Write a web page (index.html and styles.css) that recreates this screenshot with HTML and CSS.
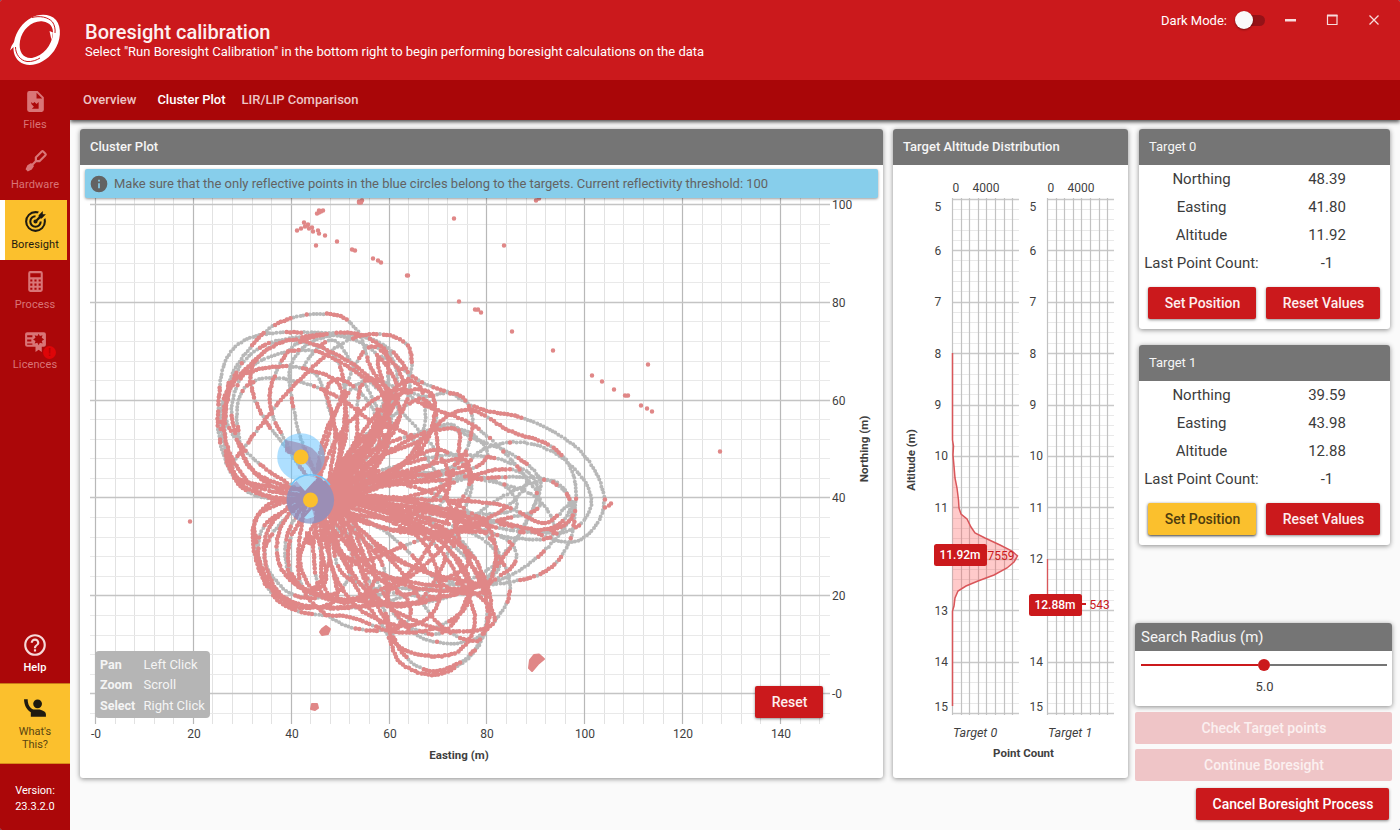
FILE: index.html
```html
<!DOCTYPE html>
<html lang="en">
<head>
<meta charset="utf-8">
<title>Boresight calibration</title>
<link rel="stylesheet" href="styles.css">
</head>
<body>
<div class="app">
  <header class="header">
    <svg class="logo" viewBox="0 0 70 80">
      <path fill="#fff" fill-rule="evenodd" d="M31 18C39 13.500 50 13.500 56 20C62 27 61 41 54 51C46 62 33 67.500 24 64C17 61.500 13 55 13.500 47L10 50.500L11.500 46L14 42C16 31 23 22 31 18ZM43 21.500C33 20 22 29 20 41C18 52 24 59 32 58C43 56 52 45 53 34C53.500 27 50 22.500 43 21.500Z"/>
      <path d="M32 17.500C40 15.500 48 17 52.500 22C54.500 25 55.500 29 55 33" fill="none" stroke="#cb191c" stroke-width="1"/>
      <path d="M15.500 47C15.500 54 20 60.500 27 61.500C32 62 37 60 40 58" fill="none" stroke="#cb191c" stroke-width="1"/>
      <path d="M49.500 31L53 32.500L51.500 40Z" fill="#fff"/>
    </svg>
    <div class="heading">
      <h1>Boresight calibration</h1>
      <p>Select "Run Boresight Calibration" in the bottom right to begin performing boresight calculations on the data</p>
    </div>
    <div class="window-tools">
      <span class="dark-label">Dark Mode:</span>
      <span class="toggle"></span>
      <svg class="window-icons" viewBox="0 0 110 24">
        <path d="M5 12.300H16" stroke="#f7dcdc" stroke-width="2.500"/>
        <path d="M47.500 7.500H57V16.500H47.500Z" stroke="#f7dcdc" stroke-width="1.200" fill="none"/>
        <path d="M47 7.500H57.500" stroke="#f7dcdc" stroke-width="2"/>
        <path d="M89.500 7.500L98.500 16.500M98.500 7.500L89.500 16.500" stroke="#f7dcdc" stroke-width="1.300"/>
      </svg>
    </div>
  </header>
  <div class="body">
    <nav class="sidebar">
      <a class="nav-item"><svg viewBox="0 0 24 24"><path fill-rule="evenodd" d="M6 2H14L20 8V20A2 2 0 0 1 18 22H6A2 2 0 0 1 4 20V4A2 2 0 0 1 6 2ZM13 3.500V9H18.500ZM8 12.500L9.500 14L11 12.500L13 14.500L15 12.500V19H8.500L10.500 17L8 14.500Z"/></svg><span>Files</span></a>
      <a class="nav-item"><svg viewBox="0 0 24 24"><g transform="rotate(45 12 12)"><path fill-rule="evenodd" d="M10.500-1H13.500Q15.500-1 15.500 1V9.500L13 12V16H14L15 20L13.500 24H10.500L9 20L10 16H11V12L8.500 9.500V1Q8.500-1 10.500-1ZM10.500 1V8.500L12 10L13.500 8.500V1Z"/></g></svg><span>Hardware</span></a>
      <a class="nav-item active"><svg viewBox="0 0 24 24"><path d="M12 2A10 10 0 0 0 2 12A10 10 0 0 0 12 22A10 10 0 0 0 22 12C22 10.840 21.790 9.690 21.390 8.610L19.790 10.210C19.930 10.800 20 11.400 20 12A8 8 0 0 1 12 20A8 8 0 0 1 4 12A8 8 0 0 1 12 4C12.600 4 13.200 4.070 13.790 4.210L15.400 2.600C14.310 2.210 13.160 2 12 2M19 2L15 6V7.500L12.450 10.050C12.300 10 12.150 10 12 10A2 2 0 0 0 10 12A2 2 0 0 0 12 14A2 2 0 0 0 14 12C14 11.850 14 11.700 13.950 11.550L16.500 9H18L22 5H19V2M12 6A6 6 0 0 0 6 12A6 6 0 0 0 12 18A6 6 0 0 0 18 12H16A4 4 0 0 1 12 16A4 4 0 0 1 8 12A4 4 0 0 1 12 8V6Z"/></svg><span>Boresight</span></a>
      <a class="nav-item"><svg viewBox="0 0 24 24"><path fill-rule="evenodd" d="M7 2H17A2 2 0 0 1 19 4V20A2 2 0 0 1 17 22H7A2 2 0 0 1 5 20V4A2 2 0 0 1 7 2ZM7 4V8H17V4ZM7 10V12H9V10ZM11 10V12H13V10ZM15 10V12H17V10ZM7 14V16H9V14ZM11 14V16H13V14ZM15 14V16H17V14ZM7 18V20H9V18ZM11 18V20H13V18ZM15 18V20H17V18Z"/></svg><span>Process</span></a>
      <a class="nav-item licences"><svg viewBox="0 0 24 24"><path fill-rule="evenodd" d="M4 3H20A2 2 0 0 1 22 5V15A2 2 0 0 1 20 17H18V22L15 20L12 22V17H4A2 2 0 0 1 2 15V5A2 2 0 0 1 4 3ZM4 6V8H9V6ZM4 10V12H8V10ZM4 14V15H9V14ZM15 4.500L13.800 6.800L11.200 6L12 8.500L9.700 10L12 11.500L11.200 14L13.800 13.200L15 15.500L16.200 13.200L18.800 14L18 11.500L20.300 10L18 8.500L18.800 6L16.200 6.800Z"/></svg><i class="badge">!</i><span>Licences</span></a>
      <a class="nav-item help"><svg viewBox="0 0 24 24"><path d="M11,18H13V16H11V18M12,2A10,10 0 0,0 2,12A10,10 0 0,0 12,22A10,10 0 0,0 22,12A10,10 0 0,0 12,2M12,20C7.590,20 4,16.410 4,12C4,7.590 7.590,4 12,4C16.410,4 20,7.590 20,12C20,16.410 16.410,20 12,20M12,6A4,4 0 0,0 8,10H10A2,2 0 0,1 12,8A2,2 0 0,1 14,10C14,12 11,11.750 11,15H13C13,12.750 16,12.500 16,10A4,4 0 0,0 12,6Z"/></svg><span>Help</span></a>
      <a class="whats-this"><svg viewBox="0 0 24 24"><path d="M1 3H4.500C4.500 8 6.500 11.500 10 13H16Q22 14.500 22 17.500V20H7.500V15.500C3.500 13 1 8.500 1 3Z"/><circle cx="14" cy="7.500" r="4.200"/></svg><span>What's<br>This?</span></a>
      <div class="version">Version:<br>23.3.2.0</div>
    </nav>
    <main class="main">
      <div class="tabs"><a>Overview</a><a class="current">Cluster Plot</a><a>LIR/LIP Comparison</a></div>
      <div class="content">
        <section class="card cluster">
          <h2>Cluster Plot</h2>
          <div class="plot-area">
            <svg id="cluster" class="chart" viewBox="80 165 803 613"></svg>
            <div class="notice"><svg viewBox="0 0 24 24"><path d="M13,9H11V7H13M13,17H11V11H13M12,2A10,10 0 0,0 2,12A10,10 0 0,0 12,22A10,10 0 0,0 22,12A10,10 0 0,0 12,2Z"/></svg>Make sure that the only reflective points in the blue circles belong to the targets. Current reflectivity threshold: 100</div>
            <div class="hints"><b>Pan</b><span>Left Click</span><b>Zoom</b><span>Scroll</span><b>Select</b><span>Right Click</span></div>
            <button class="btn reset">Reset</button>
          </div>
        </section>
        <section class="card altitude">
          <h2>Target Altitude Distribution</h2>
          <svg id="altitude" class="chart" viewBox="893 165 235 613"></svg>
        </section>
        <aside class="side">
          <section class="card target">
            <h3>Target 0</h3>
            <div class="values"><span>Northing</span><span>48.39</span><span>Easting</span><span>41.80</span><span>Altitude</span><span>11.92</span><span>Last Point Count:</span><span>-1</span></div>
            <div class="actions"><button class="btn">Set Position</button><button class="btn">Reset Values</button></div>
          </section>
          <section class="card target">
            <h3>Target 1</h3>
            <div class="values"><span>Northing</span><span>39.59</span><span>Easting</span><span>43.98</span><span>Altitude</span><span>12.88</span><span>Last Point Count:</span><span>-1</span></div>
            <div class="actions"><button class="btn yellow">Set Position</button><button class="btn">Reset Values</button></div>
          </section>
          <div class="bottom">
            <section class="card radius">
              <h3>Search Radius (m)</h3>
              <div class="slider"><i class="fill"></i><i class="knob"></i><i class="rest"></i></div>
              <div class="radius-value">5.0</div>
            </section>
            <button class="btn disabled">Check Target points</button>
            <button class="btn disabled second">Continue Boresight</button>
            <button class="btn cancel">Cancel Boresight Process</button>
          </div>
        </aside>
      </div>
    </main>
  </div>
</div>
<script src="charts.js"></script>
</body>
</html>
```

FILE: styles.css
```css
* { box-sizing: border-box; }
body { margin: 0; background: #12224a; font-family: Roboto, sans-serif; color: #3c3c3c; }
h1, h2, h3, p { margin: 0; font-weight: 400; }
.app { width: 1400px; height: 830px; display: flex; flex-direction: column; background: #fafafa; border-radius: 2px; overflow: hidden; }
.header { height: 80px; background: #cb191c; color: #fff; display: flex; flex: none; }
.logo { width: 70px; height: 80px; }
.heading { padding: 20px 0 0 15px; flex: 1; }
.heading h1 { font-size: 20px; line-height: 24px; font-weight: 500; color: #fdf0f0; }
.heading p { font-size: 13px; line-height: 15px; }
.window-tools { display: flex; align-items: center; height: 40px; }
.dark-label { font-size: 13px; margin-right: 8px; }
.toggle { width: 30px; height: 11px; border-radius: 6px; background: #951217; margin-right: 15px; }
.toggle::before { content: ""; display: block; width: 18px; height: 18px; margin-top: -4px; border-radius: 50%; background: #fafafa; box-shadow: 0 1px 2px rgba(0,0,0,.4); }
.window-icons { width: 110px; height: 24px; margin-right: 10px; }
.body { display: flex; flex: 1; min-height: 0; }
.sidebar { width: 70px; flex: none; background: #ab0709; display: flex; flex-direction: column; color: #d97577; position: relative; z-index: 2; }
.nav-item { height: 60px; display: flex; flex-direction: column; align-items: center; padding-top: 9px; font-size: 11px; line-height: 13px; letter-spacing: .1px; position: relative; }
.nav-item svg, .whats-this svg { width: 25px; height: 25px; fill: currentColor; margin-bottom: 4px; flex: none; }
.nav-item.active { background: #fbc02d; color: #1e1a10; border-left: 5px solid #fff; margin-right: 3px; padding-right: 2px; }
.badge { position: absolute; left: 43px; top: 26px; width: 13px; height: 13px; border-radius: 50%; background: #de0508; color: #b80204; font: 700 10px/13px Roboto, sans-serif; text-align: center; }
.help { margin-top: auto; height: 61px; color: #fff; font-weight: 500; padding-top: 10px; }
.help svg { color: #f6d9d9; width: 26px; height: 26px; margin-bottom: 3px; }
.whats-this { height: 81px; background: #fbc02d; border-top: 1px solid #c97a18; border-bottom: 1px solid #d98b1c; color: #1e1a10; text-align: center; font-size: 11px; line-height: 13px; padding-top: 12px; display: flex; flex-direction: column; align-items: center; }
.whats-this span { color: #5a4510; }
.version { height: 66px; padding-top: 19px; font-size: 11px; line-height: 16px; color: #fff; text-align: center; }
.main { flex: 1; min-width: 0; display: flex; flex-direction: column; }
.tabs { height: 40px; background: #a90608; display: flex; align-items: center; padding: 0 0 2px 13px; gap: 21px; font-size: 13px; font-weight: 500; color: #edc5c5; box-shadow: 0 2px 4px rgba(0,0,0,.7); position: relative; clip-path: inset(0 0 -10px 0); }
.tabs a:last-child { margin-left: -5px; }
.tabs .current { color: #fff; }
.content { flex: 1; display: flex; padding: 9px 8px 0 10px; }
.card { background: #fff; border-radius: 3px; box-shadow: 0 1px 5px rgba(0,0,0,.45); overflow: hidden; }
.card h2, .card h3 { height: 36px; line-height: 35px; padding-left: 10px; font-size: 13px; background: #757575; color: #f5f5f5; }
.card h2 { font-weight: 500; }
.cluster { width: 803px; height: 649px; margin-right: 10px; }
.plot-area { position: relative; height: 613px; }
.chart { display: block; width: 100%; height: 613px; }
.chart text { font-family: Roboto, sans-serif; font-size: 12px; fill: #3f3f3f; }
.chart .axis-title { font-weight: 700; font-size: 11.5px; }
.chart .series { font-style: italic; font-size: 12.5px; }
.chart .tag { fill: #fff; font-weight: 500; font-size: 12px; }
.chart .count { fill: #cb191c; font-size: 12px; }
.notice { position: absolute; left: 5px; top: 4px; width: 793px; height: 29px; background: #87ceeb; border-radius: 2px; box-shadow: 0 1px 3px rgba(0,0,0,.4); display: flex; align-items: center; padding-left: 4px; font-size: 13px; letter-spacing: -.008px; color: #636363; }
.notice svg { width: 20px; height: 20px; margin-right: 5px; fill: #636363; }
.hints { position: absolute; left: 15px; top: 486px; width: 115px; height: 67px; border-radius: 4px; background: #b5b5b5; color: #f4f4f4; display: grid; grid-template-columns: 43.5px auto; grid-auto-rows: 20.5px; padding: 3.5px 0 0 5px; font-size: 13px; line-height: 20px; }
.hints span { white-space: nowrap; }
.hints b { font-size: 12.5px; }
.btn { border: 0; border-radius: 2px; background: #cb191c; color: #fdeeee; font: 500 14px/32px Roboto, sans-serif; height: 32px; padding: 0 0 0 1px; box-shadow: 0 1px 3px rgba(0,0,0,.45); text-align: center; }
.reset { position: absolute; left: 675px; top: 521px; width: 68px; }
.altitude { width: 235px; height: 649px; margin-right: 7px; }
.side { width: 257px; display: flex; flex-direction: column; }
.target { width: 251px; height: 200px; margin: 0 0 16px 4px; flex: none; }
.values { display: grid; grid-template-columns: 125px 126px; grid-auto-rows: 28px; font-size: 15px; line-height: 28px; text-align: center; margin-bottom: 10px; }
.values span { white-space: nowrap; }
.actions { display: flex; gap: 10px; padding-left: 9px; }
.actions .btn { width: 108px; }
.actions .btn:last-child { width: 114px; }
.btn.yellow { background: #fbc02d; color: #4f3d0e; box-shadow: 0 1px 3px rgba(0,0,0,.8); }
.bottom { margin-top: 62px; display: flex; flex-direction: column; }
.radius { height: 83px; margin-bottom: 6px; }
.card.radius h3 { height: 28px; line-height: 28px; padding-left: 6px; font-size: 15px; }
.slider { display: flex; align-items: center; height: 28px; padding: 0 5px 0 6px; }
.slider .fill { width: 117px; height: 2px; background: #cb191c; }
.slider .knob { width: 12px; height: 12px; border-radius: 50%; background: #cb191c; }
.slider .rest { flex: 1; height: 2px; background: #757575; }
.radius-value { text-align: center; font-size: 13px; line-height: 16px; padding-left: 2px; }
.btn.disabled { background: #efc5c7; color: #fbf0f0; box-shadow: none; }
.btn.second { margin-top: 5px; }
.btn.cancel { width: 193px; align-self: flex-end; margin: 7px 3px 0 0; color: #fff; }
```

FILE: charts.js
```js
let seed = 4242;
function rnd() {
  seed = (seed * 1664525 + 1013904223) % 4294967296;
  return seed / 4294967296;
}
const line = (x1, y1, x2, y2, c, w = 1) => `<path d="M${x1} ${y1}L${x2} ${y2}" stroke="${c}" stroke-width="${w}"/>`;
const text = (x, y, s, cls = '', anchor = 'start') => `<text x="${x}" y="${y}" class="${cls}" text-anchor="${anchor}">${s}</text>`;

// Closed Catmull-Rom curve sampled at an even spacing.
function sample(pts, step) {
  const out = [];
  const n = pts.length;
  let last = null;
  for (let i = 0; i < n; i++) {
    const [a, b, c, d] = [0, 1, 2, 3].map(k => pts[(i + k - 1 + n) % n]);
    for (let t = 0; t < 1; t += 0.008) {
      const q = k => 0.5 * (2 * b[k] + (c[k] - a[k]) * t + (2 * a[k] - 5 * b[k] + 4 * c[k] - d[k]) * t * t + (3 * b[k] - a[k] - 3 * c[k] + d[k]) * t * t * t);
      const p = [q(0), q(1)];
      if (!last || Math.hypot(p[0] - last[0], p[1] - last[1]) >= step) { out.push(p); last = p; }
    }
  }
  return out;
}

const loops = [
  [[330,500],[290,500],[252,494],[231,473],[219,435],[219,395],[226,360],[245,340],[275,333],[325,333],[365,337],[388,352],[397,378],[388,410],[365,450]],
  [[335,490],[275,499],[240,472],[224,430],[230,380],[250,348],[270,328],[295,317],[320,314],[342,317],[360,335],[372,370],[400,410],[380,450]],
  [[320,490],[262,477],[240,447],[232,405],[250,365],[290,340],[335,354],[372,380],[385,412],[355,460]],
  [[320,485],[285,440],[270,405],[275,375],[295,345],[330,335],[365,345],[388,368],[395,392],[370,440]],
  [[325,495],[288,450],[265,420],[252,390],[253,365],[280,342],[315,345],[338,362],[345,400],[340,450]],
  [[330,490],[305,450],[292,400],[291,365],[310,343],[345,334],[378,342],[400,360],[410,385],[397,420],[360,465]],
  [[320,495],[280,490],[248,465],[238,430],[240,395],[265,378],[310,385],[350,405],[385,440],[365,475]],
  [[315,495],[250,490],[226,450],[221,410],[236,380],[270,367],[310,370],[340,387],[345,440]],
  [[330,490],[335,430],[320,380],[305,365],[330,340],[350,360],[380,420],[360,460]],
  [[330,490],[350,450],[390,400],[425,390],[435,410],[420,450],[370,480]],
  [[325,492],[380,430],[410,403],[450,393],[468,404],[472,430],[455,465],[400,480]],
  [[340,490],[390,430],[378,360],[400,368],[423,383],[450,393],[480,409],[526,419],[567,440],[592,466],[604,497],[598,522],[580,540],[558,541],[520,528],[430,510]],
  [[340,495],[430,465],[438,425],[470,410],[510,431],[545,443],[565,459],[575,482],[573,515],[552,530],[515,531],[440,515]],
  [[335,492],[420,480],[462,466],[482,450],[515,442],[545,448],[568,463],[588,487],[590,510],[573,529],[540,532],[470,515],[400,500]],
  [[340,495],[410,483],[480,478],[530,477],[554,483],[570,500],[564,520],[540,530],[500,522],[430,510]],
  [[345,490],[420,460],[470,455],[510,463],[535,480],[535,505],[515,540],[480,575],[430,585],[360,560]],
  [[345,490],[430,430],[480,441],[518,458],[540,480],[532,510],[505,555],[470,590],[410,595],[340,570]],
  [[340,500],[430,500],[500,505],[545,523],[573,502],[570,540],[550,568],[520,580],[475,583],[400,560]],
  [[335,505],[350,575],[385,630],[400,662],[431,675],[458,666],[480,643],[487,605],[475,570],[430,530]],
  [[330,500],[345,560],[380,610],[397,645],[430,656],[460,650],[475,620],[460,580],[430,540],[380,510]],
  [[330,500],[380,560],[392,610],[425,639],[470,641],[498,617],[510,590],[502,562],[475,535],[400,510]],
  [[320,500],[272,503],[253,530],[260,572],[280,602],[310,614],[350,617],[395,632],[440,626],[470,595],[440,540],[380,510]],
  [[315,500],[285,510],[266,535],[267,570],[285,598],[320,607],[375,605],[430,600],[480,580],[450,540]],
  [[320,500],[294,520],[285,555],[300,588],[350,600],[420,603],[470,588],[500,565],[480,530],[400,500]],
  [[315,505],[270,520],[258,550],[270,585],[295,607],[335,600],[330,560]],
  [[315,500],[275,530],[265,560],[285,590],[315,598],[345,585],[350,540]],
  [[320,505],[329,560],[310,590],[290,570],[292,535]],
  [[330,505],[330,560],[355,605],[395,625],[428,618],[440,585],[415,535]],
  [[330,505],[400,510],[460,540],[485,580],[490,615],[470,655],[432,671],[400,650],[380,600]],
  [[330,490],[240,480],[225,430],[235,375],[265,345],[310,336],[350,333],[375,342],[388,360],[380,410]],
  [[330,498],[262,512],[257,545],[270,588],[300,605],[360,607],[420,590],[470,560],[430,525]],
  [[340,494],[450,460],[470,470],[468,500],[440,550],[390,590],[350,600],[320,590],[315,530]],
  [[330,480],[400,395],[410,350],[380,334],[340,345],[290,390],[250,440],[232,470],[260,485]],
  [[340,500],[400,570],[440,625],[480,640],[486,600],[460,540],[440,480],[400,430],[360,440]],
  [[320,500],[330,430],[365,350],[395,365],[415,400],[480,430],[540,500],[500,520],[420,540],[350,560]],
  [[345,500],[375,575],[430,590],[500,580],[545,550],[572,510],[545,480],[470,520],[420,600],[370,590]],
  [[300,490],[245,450],[225,410],[245,370],[300,350],[345,365],[400,410],[450,480],[400,530]],
  [[330,505],[300,560],[330,600],[400,580],[440,530],[470,480],[440,450],[390,470]]
];
// Curved passes that leave the target area and turn back to it.
[[-66,125,18,22],[-56,128,22,-20],[-48,145,24,16],[-36,140,28,-26],[-24,150,26,28],[-13,170,22,-22],[-3,205,24,20],[4,195,18,-16],[10,235,24,-26],[20,205,32,24],[30,190,36,-34],[38,215,26,22],[48,185,40,-28],[60,155,34,28],[78,112,26,-16],[-80,115,24,22],[100,98,24,10]].forEach(([deg, len, w, bend]) => {
  const a = deg * Math.PI / 180, ca = Math.cos(a), sa = Math.sin(a);
  loops.push([[-.08, 4], [.4, w + bend], [.8, w + bend * .5], [1, 0], [.85, -w + bend * .5], [.35, -w * .4 + bend]].map(([u, v]) => [322 + len * u * ca - v * sa, 493 + len * u * sa + v * ca]));
});

let grey = '', red = '';
loops.forEach((pts, k) => {
  const bias = (k * 7 % 5 - 2) * .09;
  let hot = false;
  sample(pts, 3.3).forEach(([x, y]) => {
    const dist = Math.hypot(x - 325, y - 500);
    let p = dist < 100 ? 1 : dist < 150 ? .72 : .42;
    if (y > 510 && x < 500) p = .82;
    if (y < 465 && x < 310) p = .42;
    if (x > 490) p = .26;
    if (rnd() < .34) hot = rnd() < p + bias;
    const px = x + rnd() * .9 - .45, py = y + rnd() * .9 - .45;
    const d = `M${px.toFixed(1)} ${py.toFixed(1)}h0`;
    grey += d;
    if (hot) red += d;
  });
});
[[454,218],[504,245],[407,275],[459,301],[475,309],[478,309],[481,312],[512,331],[553,350],[592,375],[602,381],[614,389],[625,395],[628,395],[641,405],[647,408],[652,411],[648,364],[720,451],[190,521],[609,505],[611,503],[605,507],[605,499],[316,245],[325,235],[337,241],[352,249],[355,250],[373,258],[378,260],[381,262],[536,200],[539,198],[297,230],[301,228],[304,222],[305,226],[308,224],[309,228],[312,227],[313,231],[318,230],[319,233],[317,213],[319,210],[321,211],[323,210],[319,212],[359,201],[361,202],[362,200],[408,275],[359,202]].forEach(([x, y]) => { red += `M${x} ${y + .5}h0`; });

let g = '';
for (let i = 0; i < 38; i++) {
  const x = Math.round(95 + i * 19.57) + .5;
  if (i % 5) g += line(x, 198, x, 724, '#e2e2e2');
}
for (let i = 0; i < 27; i++) {
  const y = Math.round(204 + i * 19.57) + .5;
  if (i % 5) g += line(90, y, 830, y, '#e9e9e9', 1.2);
}
for (let i = 0; i < 8; i++) {
  const x = Math.round(95 + i * 97.85) + .5;
  g += line(x, 198, x, 724, '#b8b8b8', 1.2);
  g += text(x + .5, 738, i ? i * 20 : '-0', '', 'middle');
}
for (let i = 0; i < 6; i++) {
  const y = Math.round(204 + i * 97.8) + .5;
  g += line(90, y, 830, y, '#c4c4c4', 1.3);
  g += text(832, y + 4.5, i < 5 ? 100 - i * 20 : '-0');
}
g += `<path d="${grey}" stroke="#b8b8b8" stroke-width="4" stroke-linecap="round"/>`;
g += `<path d="${red}" stroke="#e08787" stroke-width="4.5" stroke-linecap="round"/>`;
g += '<g fill="#e08787" stroke="#e08787" stroke-width="2" stroke-linejoin="round"><path d="M534 655L539 654.500L544 659L538 664L532 671L529 668L530 660Z"/><path d="M306 532L313 537L315 543L312 545L306 543Z"/><path d="M322 629L326 626L330 629L328 634L322 635L320 632Z"/><path d="M312 704L317 704L318 708L315 710L311 709Z"/></g>';
g += '<circle cx="301" cy="457" r="23.8" fill="#5dbfff" fill-opacity=".5"/><path d="M285 440Q300 442 312 448Q324 458 321 469L314 477Q309 460 285 452Z" fill="#9b91b8" fill-opacity=".75"/><circle cx="310.300" cy="500" r="23.800" fill="#7f92c8" fill-opacity=".72"/>';
g += '<path d="M292 476L305 491L317 478Q303 473 292 476Z M304 518L312 509L314 517L307 519Z" fill="#a9dcfa"/><path d="M291 485A23.800 23.800 0 0 1 330 485" fill="none" stroke="#6fc3f7" stroke-width="1.500"/>';
g += '<circle cx="301" cy="457" r="7.500" fill="#fbc02d"/><circle cx="310.500" cy="500" r="7.500" fill="#fbc02d"/>';
g += text(459, 759, 'Easting (m)', 'axis-title', 'middle');
g += '<text class="axis-title" text-anchor="middle" transform="translate(867.500 449) rotate(-90)">Northing (m)</text>';
document.getElementById('cluster').innerHTML = g;

let a = '';
[0, 95].forEach((dx, idx) => {
  for (let i = 0; i <= 50; i++) {
    const y = Math.round(198.7 + i * 10.29) + .5;
    a += line(952 + dx, y, 1019 + dx, y, i % 5 ? '#e9e9e9' : '#c9c9c9', i % 5 ? 1 : 1.5);
  }
  for (let i = 0; i < 8; i++) {
    const x = Math.round(952 + i * 8.6) + .5 + dx;
    a += line(x, 198, x, 715, '#c2c2c2', 1.2);
  }
  for (let v = 5; v <= 15; v++) {
    if (v === 12 + idx) { if (idx === 0) continue; else continue; }
    const y = v === 5 ? 206 : v === 15 ? 706 : 198.7 + (v - 5) * 51.45;
    a += text(934.5 + dx, y + 4.5, v);
  }
  a += text(952.5 + dx, 192, '0') + text(972.5 + dx, 192, '4000');
  a += text(953 + dx, 737, 'Target ' + idx, 'series');
});
a += '<path d="M952.500 353V440L953.500 446L953 455L954 466L955 478L957 488L958.500 500L959 508L961 514L967 519L971 527L975 533L985 538L1000 545L1012 551L1017.500 556L1014 562L1007 568L994 575L978 581L966 586L958 591L955 598L954 606L952.500 611V706" fill="rgba(255,80,80,.3)" stroke="#d9565a" stroke-width="1.500"/>';
a += line(1047.5, 559, 1047.5, 597, '#d9565a', 1.3) + line(1081, 604, 1086, 604, '#cb191c', 2);
a += '<rect x="934" y="544" width="53" height="22" rx="2.500" fill="#cb191c"/><rect x="1029" y="594" width="53" height="22" rx="2.500" fill="#cb191c"/>';
a += text(960, 559, '11.92m', 'tag', 'middle') + text(1055, 609, '12.88m', 'tag', 'middle');
a += text(987.5, 560, '7559', 'count') + text(1089.5, 609, '543', 'count');
a += text(1023.5, 757, 'Point Count', 'axis-title', 'middle');
a += '<text class="axis-title" text-anchor="middle" transform="translate(915 460) rotate(-90)">Altitude (m)</text>';
document.getElementById('altitude').innerHTML = a;
```
